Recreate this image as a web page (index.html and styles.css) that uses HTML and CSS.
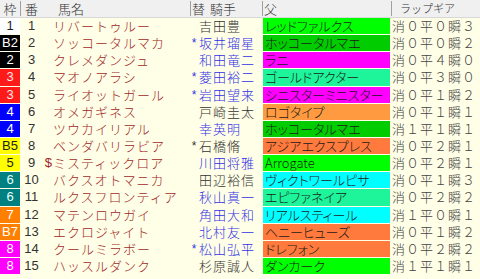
FILE: index.html
```html
<!DOCTYPE html>
<html lang="ja">
<head>
<meta charset="utf-8">
<title>出馬表</title>
<link rel="stylesheet" href="styles.css">
</head>
<body>
<div class="table">
  <div class="head">
    <div class="h h-waku"><span>枠</span></div>
    <div class="h h-num"><span>番</span></div>
    <div class="h h-name"><span>馬名</span></div>
    <div class="h h-jockey"><span class="kae">替</span><span>騎手</span></div>
    <div class="h h-sire"><span>父</span></div>
    <div class="h h-lap"><span>ラップギア</span></div>
  </div>

  <div class="row"><div class="waku w1">1</div><div class="num">1</div><div class="mk"></div><div class="name">リバートゥルー</div><div class="jm"></div><div class="jk dark">吉田豊</div><div class="sire c-lime">レッドファルクス</div><div class="lap">消０平０瞬３</div></div>
  <div class="row"><div class="waku w2">B2</div><div class="num">2</div><div class="mk"></div><div class="name">ソッコータルマカ</div><div class="jm blue">*</div><div class="jk blue">坂井瑠星</div><div class="sire c-green">ホッコータルマエ</div><div class="lap">消０平０瞬２</div></div>
  <div class="row"><div class="waku w2">2</div><div class="num">3</div><div class="mk"></div><div class="name">クレメダンジュ</div><div class="jm"></div><div class="jk blue">和田竜二</div><div class="sire c-mag">ラニ</div><div class="lap">消０平４瞬０</div></div>
  <div class="row"><div class="waku w3">3</div><div class="num">4</div><div class="mk"></div><div class="name">マオノアラシ</div><div class="jm blue">*</div><div class="jk blue">菱田裕二</div><div class="sire c-mint">ゴールドアクター</div><div class="lap">消０平３瞬０</div></div>
  <div class="row"><div class="waku w3">3</div><div class="num">5</div><div class="mk"></div><div class="name">ライオットガール</div><div class="jm blue">*</div><div class="jk blue">岩田望来</div><div class="sire c-mag">シニスターミニスター</div><div class="lap">消０平１瞬２</div></div>
  <div class="row"><div class="waku w4">4</div><div class="num">6</div><div class="mk"></div><div class="name">オメガギネス</div><div class="jm"></div><div class="jk dark">戸崎圭太</div><div class="sire c-orange">ロゴタイプ</div><div class="lap">消０平１瞬１</div></div>
  <div class="row"><div class="waku w4">4</div><div class="num">7</div><div class="mk"></div><div class="name">ツウカイリアル</div><div class="jm"></div><div class="jk blue">幸英明</div><div class="sire c-green">ホッコータルマエ</div><div class="lap">消１平１瞬１</div></div>
  <div class="row"><div class="waku w5">B5</div><div class="num">8</div><div class="mk"></div><div class="name">ベンダバリラビア</div><div class="jm dark">*</div><div class="jk dark">石橋脩</div><div class="sire c-coral">アジアエクスプレス</div><div class="lap">消０平２瞬１</div></div>
  <div class="row"><div class="waku w5">5</div><div class="num">9</div><div class="mk">$</div><div class="name">ミスティックロア</div><div class="jm"></div><div class="jk blue">川田将雅</div><div class="sire c-lime">Arrogate</div><div class="lap">消０平２瞬１</div></div>
  <div class="row"><div class="waku w6">6</div><div class="num">10</div><div class="mk"></div><div class="name">バクスオトマニカ</div><div class="jm"></div><div class="jk dark">田辺裕信</div><div class="sire c-cyan">ヴィクトワールピサ</div><div class="lap">消０平１瞬３</div></div>
  <div class="row"><div class="waku w6">6</div><div class="num">11</div><div class="mk"></div><div class="name">ルクスフロンティア</div><div class="jm"></div><div class="jk blue">秋山真一</div><div class="sire c-mint">エピファネイア</div><div class="lap">消０平２瞬２</div></div>
  <div class="row"><div class="waku w7">7</div><div class="num">12</div><div class="mk"></div><div class="name">マテンロウガイ</div><div class="jm"></div><div class="jk blue">角田大和</div><div class="sire c-cyan">リアルスティール</div><div class="lap">消１平０瞬１</div></div>
  <div class="row"><div class="waku w7">B7</div><div class="num">13</div><div class="mk"></div><div class="name">エクロジャイト</div><div class="jm"></div><div class="jk blue">北村友一</div><div class="sire c-coral">ヘニーヒューズ</div><div class="lap">消０平１瞬２</div></div>
  <div class="row"><div class="waku w8">8</div><div class="num">14</div><div class="mk"></div><div class="name">クールミラボー</div><div class="jm blue">*</div><div class="jk blue">松山弘平</div><div class="sire c-coral">ドレフォン</div><div class="lap">消０平２瞬２</div></div>
  <div class="row"><div class="waku w8">8</div><div class="num">15</div><div class="mk"></div><div class="name">ハッスルダンク</div><div class="jm"></div><div class="jk dark">杉原誠人</div><div class="sire c-lime">ダンカーク</div><div class="lap">消１平１瞬１</div></div>
</div>
</body>
</html>
```
FILE: styles.css
```css
html, body {
  margin: 0;
  padding: 0;
  background: #fffee6;
}
body {
  width: 480px;
  height: 279px;
  overflow: hidden;
  font-family: "Noto Sans CJK JP", "Liberation Sans", sans-serif;
  font-size: 13px;
  font-weight: 300;
}
.table {
  display: flex;
  flex-direction: column;
}
.head, .row {
  display: grid;
  grid-template-columns: 20px 23px 9px 138px 8px 64px 129px 1fr;
}
.head {
  height: 17px;
  background: #f0f0f0;
  border-bottom: 1px solid #d8d8d8;
  color: #333;
}
.h {
  display: flex;
  align-items: center;
  height: 17px;
  line-height: 17px;
  position: relative;
  white-space: nowrap;
}
.h::before {
  content: "";
  position: absolute;
  left: 0;
  top: 1px;
  bottom: 1px;
  width: 1px;
  background: #a0a0a0;
}
.h-waku::before { display: none; }
.h-waku { justify-content: center; }
.h-num { justify-content: center; }
.h-name { grid-column: 3 / 5; padding-left: 15px; }
.h-name::before { display: none; }
.h-jockey { grid-column: 5 / 7; padding-left: 2px; }
.h-jockey .kae { margin-right: 5px; }
.h-sire { padding-left: 2px; }
.h-lap { padding-left: 9px; font-size: 11px; }

.row {
  height: 17.15px;
  line-height: 16px;
  white-space: nowrap;
}
.waku {
  margin-bottom: 1px;
  text-align: center;
  font-family: "Liberation Sans", sans-serif;
  font-weight: 400;
  font-size: 13px;
  color: #fff;
}
.w1 { background: #ffffff; color: #222; }
.w2 { background: #000000; color: #fff; }
.w3 { background: #ff1a1a; color: #ffe6e6; }
.w4 { background: #0000ff; color: #fff; }
.w5 { background: #ffff00; color: #222; }
.w6 { background: #008080; color: #e8ffff; }
.w7 { background: #ff8000; color: #fff; }
.w8 { background: #ff00ff; color: #fff; }

.num {
  text-align: center;
  font-family: "Liberation Sans", sans-serif;
  font-weight: 400;
  color: #333;
}
.mk {
  color: #a02828;
  font-family: "Liberation Sans", sans-serif;
  font-weight: 400;
  text-align: right;
}
.name {
  color: #a02828;
  padding-left: 1px;
  letter-spacing: 1px;
}
.jm {
  font-family: "Liberation Sans", sans-serif;
  font-weight: 400;
  font-size: 12px;
  text-align: center;
}
.jk {
  letter-spacing: 1px;
  padding-left: 1px;
}
.blue { color: #3232e6; }
.dark { color: #333; }
.sire {
  margin: 0 1px 1px 1px;
  padding-left: 2px;
  color: #1a1a1a;
  font-feature-settings: "palt";
}
.c-lime { background: #00ff00; }
.c-green { background: #00cc00; }
.c-mag { background: #ff00ff; }
.c-mint { background: #1ef59a; }
.c-orange { background: #ff9a40; }
.c-coral { background: #ff7a3c; }
.c-cyan { background: #00ffff; }
.lap {
  padding-left: 1px;
  color: #444;
  letter-spacing: 1px;
}
```
